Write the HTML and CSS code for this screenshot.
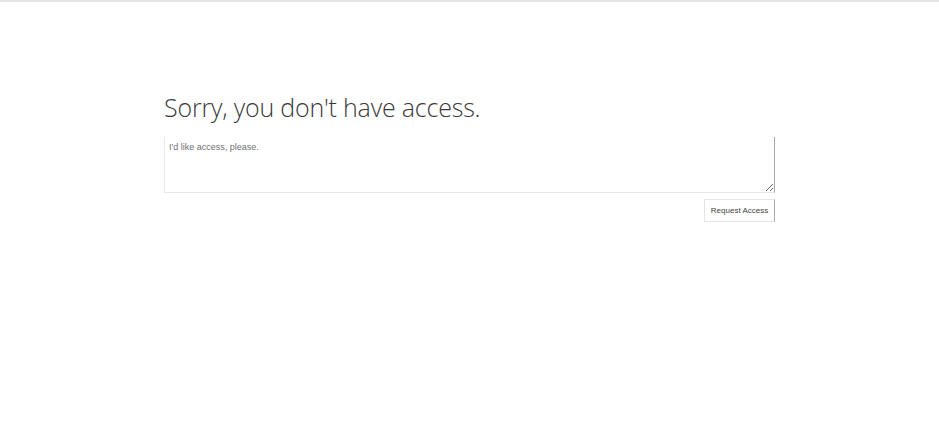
FILE: index.html
```html
<!DOCTYPE html>
<html>
<head>
<meta charset="utf-8">
<link rel="stylesheet" href="styles.css">
</head>
<body>
<div class="topbar"></div>
<main class="content">
  <h1 class="title">Sorry, you don't have access.</h1>
  <textarea class="message">I'd like access, please.</textarea>
  <div class="actions">
    <button class="request">Request Access</button>
  </div>
</main>
</body>
</html>
```
FILE: styles.css
```css
html, body {
  margin: 0;
  padding: 0;
  background: #fff;
}
.topbar {
  height: 2px;
  background: #e6e6e6;
}
.content {
  width: 611px;
  margin: 0 0 0 164px;
  padding-top: 88px;
  display: flex;
  flex-direction: column;
}
.title {
  margin: 0 0 13px 0;
  font-family: "Open Sans", sans-serif;
  font-weight: 300;
  font-size: 25px;
  line-height: 34px;
  color: #3a3a3a;
  letter-spacing: -0.2px;
}
.message {
  box-sizing: border-box;
  width: 611px;
  height: 56px;
  margin: 0;
  padding: 4px 4px;
  border: none;
  border-left: 1px solid #e8e8e8;
  border-bottom: 1px solid #e8e8e8;
  border-right: 1px solid #a8a8a8;
  font-family: "Liberation Sans", Arial, sans-serif;
  font-size: 9px;
  line-height: 12px;
  color: #707070;
  outline: none;
  resize: both;
}
.actions {
  display: flex;
  justify-content: flex-end;
  margin-top: 6px;
}
.request {
  box-sizing: border-box;
  width: 71px;
  height: 23px;
  padding: 0;
  background: #fff;
  border: 1px solid #e6e6e6;
  border-right-color: #a8a8a8;
  font-family: "Liberation Sans", Arial, sans-serif;
  font-size: 8px;
  color: #444;
}
```
